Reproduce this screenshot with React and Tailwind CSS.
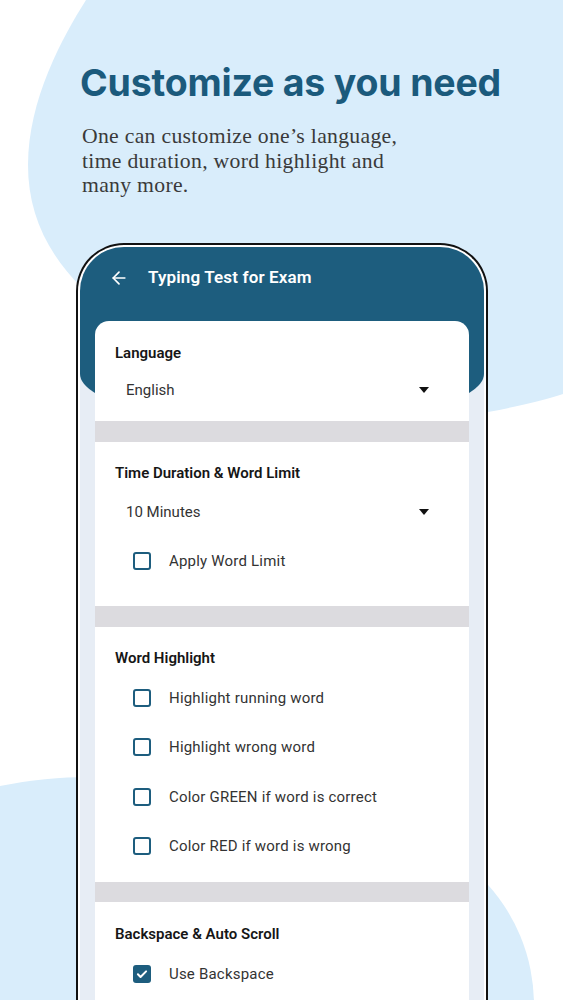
import { ArrowLeft } from 'lucide-react';

const teal = 'bg-[#1d5d7e]';

const Caret = () => (
  <span className="block w-0 h-0 border-x-[5px] border-t-[6px] border-x-transparent border-t-[#111]" />
);

const Checkbox = ({ checked }) =>
  checked ? (
    <span className="flex items-center justify-center w-[18px] h-[18px] rounded-[3px] bg-[#1d5d7e]">
      <svg viewBox="0 0 24 24" className="w-[14px] h-[14px]" fill="none" stroke="white" strokeWidth="3.5" strokeLinecap="round" strokeLinejoin="round">
        <path d="M5 12.5l4.5 4.5L19 7.5" />
      </svg>
    </span>
  ) : (
    <span className="block w-[18px] h-[18px] rounded-[3px] border-2 border-[#1d5d7e]" />
  );

const CheckRow = ({ label, checked }) => (
  <div className="flex items-center h-[20px] pl-[18px] mt-[29.5px] first:mt-0">
    <Checkbox checked={checked} />
    <span className="ml-[18px] text-[15px] leading-[20px] text-[#333] tracking-[0.2px]">{label}</span>
  </div>
);

const Dropdown = ({ value }) => (
  <div className="flex items-center justify-between h-[20px] pl-[11px] pr-[20px]">
    <span className="text-[15px] leading-[20px] text-[#333]">{value}</span>
    <Caret />
  </div>
);

const SectionTitle = ({ children }) => (
  <h3 className="text-[15px] leading-[20px] font-semibold text-[#161616]">{children}</h3>
);

const Band = ({ h = 'h-[21px]' }) => <div className={`${h} bg-[#dcdbdf]`} />;

const Background = () => (
  <svg className="absolute inset-0" width="563" height="1000" viewBox="0 0 563 1000">
    <path
      d="M86 0 C62 38 28 100 28 165 C28 212 46 252 82 288 L300 425 L488 412 C520 406 545 400 563 394 L563 0 Z"
      fill="#d9edfb"
    />
    <path d="M0 786 C30 780 60 777 90 777 L90 1000 L0 1000 Z" fill="#d9edfb" />
    <circle cx="354" cy="1005" r="180" fill="#d9edfb" />
  </svg>
);

export default function App() {
  return (
    <div className="relative w-[563px] h-[1000px] overflow-hidden bg-white" style={{ fontFamily: 'Roboto, "Noto Sans", sans-serif' }}>
      <Background />

      <div className="relative flex flex-col">
        <div className="pl-[80px] pt-[60px]">
          <h1 className="text-[37.5px] leading-[46px] font-bold tracking-[-0.2px] text-[#1b5a7c]" style={{ fontFamily: 'Inter, "Liberation Sans", sans-serif' }}>
            Customize as you need
          </h1>
          <p className="mt-[18px] pl-[2px] text-[21.7px] leading-[24.5px] text-[#3a3a3a] tracking-[0.3px]" style={{ fontFamily: '"Liberation Serif", serif' }}>
            One can customize one’s language,
            <br />
            time duration, word highlight and
            <br />
            many more.
          </p>
        </div>

        {/* phone */}
        <div className="ml-[76px] mt-[45px] w-[412px] h-[800px] rounded-t-[48px] border-2 border-b-0 border-[#111] bg-white p-[2px] pb-0">
          <div className="h-full rounded-t-[44px] overflow-hidden bg-[#e7edf5]">
            <div className={`h-[177px] pt-[20px] ${teal} rounded-b-[50%_50px]`}>
              <div className="flex items-center h-[22px] pl-[29px]">
                <ArrowLeft size={20} color="white" strokeWidth={2} />
                <span className="ml-[19px] text-[17px] font-semibold text-white tracking-[0.15px]">Typing Test for Exam</span>
              </div>
            </div>

            <div className="relative -mt-[103px] px-[15px]">
              <div className="rounded-t-[14px] overflow-hidden">
                <section className="bg-white px-[20px] pt-[22px] pb-[21px]">
                  <SectionTitle>Language</SectionTitle>
                  <div className="mt-[17px]">
                    <Dropdown value="English" />
                  </div>
                </section>
                <Band />
                <section className="bg-white px-[20px] pt-[21px] pb-[35px]">
                  <SectionTitle>Time Duration &amp; Word Limit</SectionTitle>
                  <div className="mt-[19px]">
                    <Dropdown value="10 Minutes" />
                  </div>
                  <div className="mt-[29px]">
                    <CheckRow label="Apply Word Limit" />
                  </div>
                </section>
                <Band />
                <section className="bg-white px-[20px] pt-[21px] pb-[26px]">
                  <SectionTitle>Word Highlight</SectionTitle>
                  <div className="mt-[20px] flex flex-col">
                    <CheckRow label="Highlight running word" />
                    <CheckRow label="Highlight wrong word" />
                    <CheckRow label="Color GREEN if word is correct" />
                    <CheckRow label="Color RED if word is wrong" />
                  </div>
                </section>
                <Band h="h-[20px]" />
                <section className="bg-white px-[20px] pt-[22px] pb-[35px]">
                  <SectionTitle>Backspace &amp; Auto Scroll</SectionTitle>
                  <div className="mt-[20px] flex flex-col">
                    <CheckRow label="Use Backspace" checked />
                  </div>
                </section>
              </div>
            </div>
          </div>
        </div>
      </div>
    </div>
  );
}
